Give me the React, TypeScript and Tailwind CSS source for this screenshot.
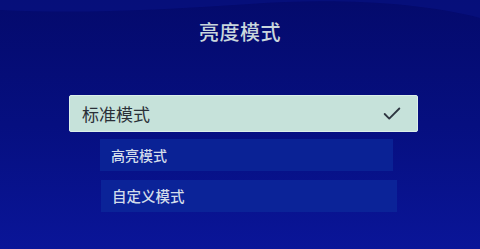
import { Check } from "lucide-react";

const cjk = { fontFamily: '"Noto Sans CJK SC", "Noto Sans", sans-serif' };

export default function App() {
  return (
    <div
      className="relative w-full h-[249px] overflow-hidden bg-gradient-to-b from-[#040a6c] via-[#060f80] to-[#0a1598]"
      style={cjk}
    >
      {/* top wave band */}
      <svg className="absolute top-0 left-0 w-full h-[40px]" viewBox="0 0 480 40" preserveAspectRatio="none">
        <path d="M0 0 H480 V18 C420 2 330 -2 250 4 C160 10 80 14 0 10 Z" fill="#07107e" opacity="0.8" />
      </svg>

      <div className="relative flex flex-col">
        <h1 className="mt-[19px] text-center text-[20px] leading-[26px] font-medium text-[#c9d6dc] tracking-[0.5px]">
          亮度模式
        </h1>

        <div className="mt-[50px] ml-[69px] w-[349px] h-[37px] rounded-[2px] bg-[#c6e2da] border border-[#dcefea] flex items-center justify-between pl-[12px] pr-[14px]">
          <span className="text-[17px] text-[#2a3038]">标准模式</span>
          <Check className="w-[22px] h-[22px] text-[#2e3640]" strokeWidth={2} />
        </div>

        <div className="mt-[7px] ml-[100px] w-[293px] h-[32px] bg-[#0a2295] flex items-center pl-[11px]">
          <span className="text-[14px] font-medium text-[#d2dcea]">高亮模式</span>
        </div>

        <div className="mt-[9px] ml-[101px] w-[296px] h-[32px] bg-[#0b2398] flex items-center pl-[11px]">
          <span className="text-[14.5px] font-medium text-[#d2dcea]">自定义模式</span>
        </div>
      </div>
    </div>
  );
}
